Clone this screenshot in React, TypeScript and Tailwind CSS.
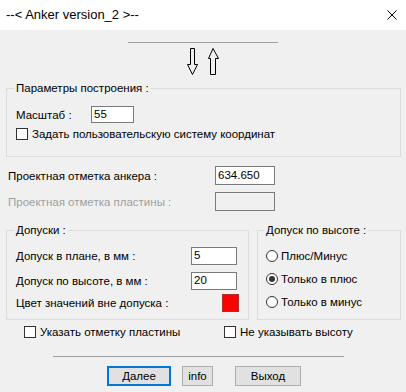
import React from 'react';

const Check: React.FC = () => (
  <span className="block w-[12px] h-[12px] border border-[#333333] bg-white shrink-0" />
);

const Radio: React.FC<{ on?: boolean }> = ({ on }) => (
  <span className="flex items-center justify-center w-[12px] h-[12px] rounded-full border border-[#333333] bg-white shrink-0">
    {on && <span className="block w-[6px] h-[6px] rounded-full bg-[#333333]" />}
  </span>
);

const Field: React.FC<{ value?: string; className?: string; disabled?: boolean }> = ({ value, className, disabled }) => (
  <div
    className={`border border-[#7a7a7a] px-[2px] leading-[15px] ${disabled ? 'bg-[#f0f0f0]' : 'bg-white'} ${className ?? ''}`}
  >
    {value}
  </div>
);

const Btn: React.FC<{ label: string; w: string; primary?: boolean }> = ({ label, w, primary }) => (
  <button
    type="button"
    className={`h-[20px] bg-[#e1e1e1] ${w} ${primary ? 'border-2 border-[#0078d7]' : 'border border-[#adadad]'}`}
  >
    {label}
  </button>
);

export default function App() {
  return (
    <div className="w-[406px] h-[392px] text-[11.5px] leading-[14px] text-black font-['Liberation_Sans',Arial,sans-serif] overflow-hidden">
      {/* title bar */}
      <div className="h-[30px] bg-white flex items-center justify-between pl-[6px] pr-[9px]">
        <span className="text-[13px]">--&lt; Anker version_2 &gt;--</span>
        <svg width="10" height="10" viewBox="0 0 10 10">
          <path d="M0.5 0.5 L9.5 9.5 M9.5 0.5 L0.5 9.5" stroke="#000" strokeWidth="1" />
        </svg>
      </div>

      <div className="h-[362px] bg-[#f0f0f0] flex flex-col">
        <div className="mt-[12px] mx-auto w-[150px] h-px bg-[#a0a0a0]" />
        <svg className="mt-[5px] mx-auto" width="34" height="27" viewBox="0 0 34 27">
          <path d="M4.5 0.5 H8.5 V16.5 H11.5 L6.5 26.5 L1.5 16.5 H4.5 Z" fill="none" stroke="#000" />
          <path d="M24.5 26.5 H29.5 V10.5 H32.5 L27 0.5 L22.5 10.5 H24.5 Z" fill="none" stroke="#000" />
        </svg>

        <fieldset className="mt-[6px] ml-[6px] mr-[5px] h-[76px] border border-[#dcdcdc] pl-[7px]">
          <legend className="px-[2px]">Параметры построения :</legend>
          <div className="ml-[2px] mt-[11px] flex items-center">
            <span className="w-[75px]">Масштаб :</span>
            <Field value="55" className="w-[43px] h-[17px]" />
          </div>
          <div className="ml-[2px] mt-[4px] flex items-center gap-[4px]">
            <Check />
            <span>Задать пользовательскую систему координат</span>
          </div>
        </fieldset>

        <div className="mt-[9px] ml-[8px] flex items-center">
          <span className="w-[207px]">Проектная отметка анкера :</span>
          <Field value="634.650" className="w-[60px] h-[19px] leading-[17px]" />
        </div>
        <div className="mt-[7px] ml-[8px] flex items-center text-[#a0a0a0]">
          <span className="w-[207px]">Проектная отметка пластины :</span>
          <Field disabled className="w-[60px] h-[19px]" />
        </div>

        <div className="mt-[12px] ml-[6px] mr-[5px] flex gap-[8px]">
          <fieldset className="w-[243px] h-[97px] border border-[#dcdcdc] pl-[7px]">
            <legend className="px-[2px]">Допуски :</legend>
            <div className="ml-[2px] mt-[10px] flex items-center">
              <span className="w-[175px]">Допуск в плане, в мм :</span>
              <Field value="5" className="w-[46px] h-[18px]" />
            </div>
            <div className="ml-[2px] mt-[7px] flex items-center">
              <span className="w-[175px]">Допуск по высоте, в мм :</span>
              <Field value="20" className="w-[46px] h-[18px]" />
            </div>
            <div className="ml-[2px] mt-[4px] flex items-center">
              <span className="w-[206px]">Цвет значений вне допуска :</span>
              <span className="block w-[17px] h-[18px] bg-[#ff0000] border border-[#b03030]" />
            </div>
          </fieldset>

          <fieldset className="flex-1 h-[97px] border border-[#dcdcdc] pl-[6px]">
            <legend className="px-[2px]">Допуск по высоте :</legend>
            <div className="ml-[2px] mt-[12px] flex flex-col gap-[9px]">
              <div className="flex items-center gap-[3px]">
                <Radio />
                <span>Плюс/Минус</span>
              </div>
              <div className="flex items-center gap-[3px]">
                <Radio on />
                <span>Только в плюс</span>
              </div>
              <div className="flex items-center gap-[3px]">
                <Radio />
                <span>Только в минус</span>
              </div>
            </div>
          </fieldset>
        </div>

        <div className="mt-[5px] flex items-center">
          <div className="ml-[24px] w-[200px] flex items-center gap-[4px]">
            <Check />
            <span>Указать отметку пластины</span>
          </div>
          <div className="flex items-center gap-[4px]">
            <Check />
            <span>Не указывать высоту</span>
          </div>
        </div>

        <div className="mt-[17px] ml-[53px] w-[291px] h-px bg-[#a0a0a0]" />

        <div className="mt-[9px] ml-[107px] flex items-center">
          <Btn label="Далее" w="w-[64px]" primary />
          <span className="ml-[11px]"><Btn label="info" w="w-[31px]" /></span>
          <span className="ml-[22px]"><Btn label="Выход" w="w-[66px]" /></span>
        </div>
      </div>
    </div>
  );
}
